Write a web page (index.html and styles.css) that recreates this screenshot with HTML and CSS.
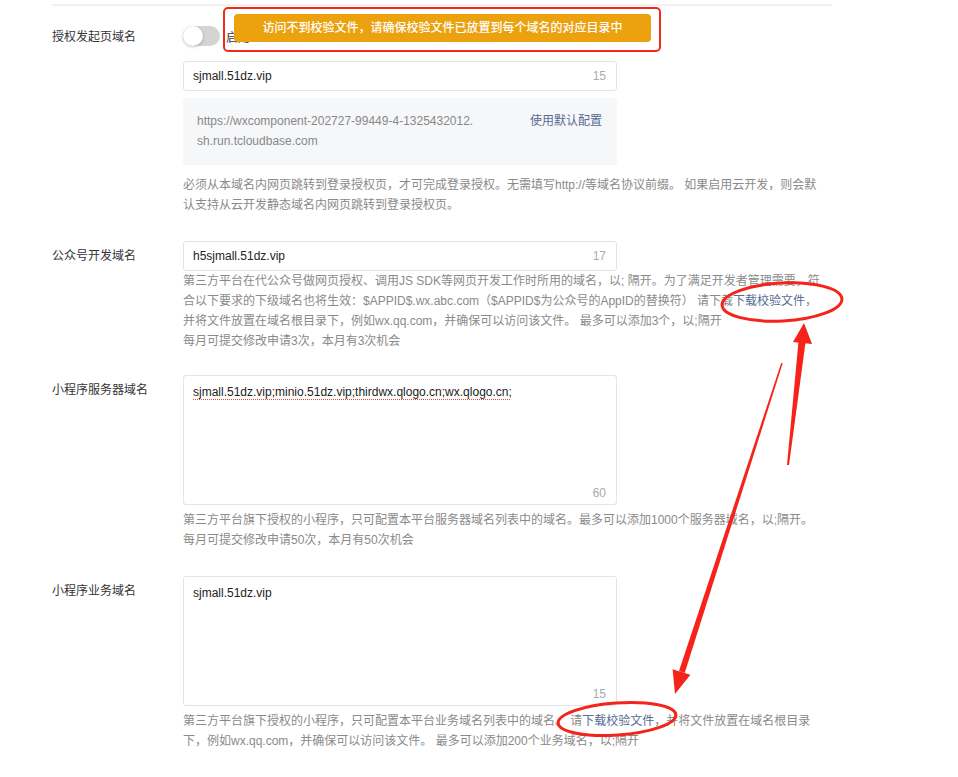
FILE: index.html
```html
<!DOCTYPE html>
<html>
<head>
    <meta charset="UTF-8">
    <meta name="viewport" content="width=device-width, initial-scale=1.0">
    <title>域名配置</title>
    <link rel="stylesheet" href="styles.css">
</head>
<body>
    <div class="page">
        <div class="form">
            <div class="form-row row-auth">
                <div class="form-label">授权发起页域名</div>
                <div class="form-control">
                    <div class="switch-line">
                        <span class="switch"><span class="switch-knob"></span></span>
                        <span class="switch-text">启用</span>
                    </div>
                    <div class="field">
                        <span class="field-value">sjmall.51dz.vip</span>
                        <span class="field-count">15</span>
                    </div>
                    <div class="default-box">
                        <div class="default-url">https://wxcomponent-202727-99449-4-1325432012.<br>sh.run.tcloudbase.com</div>
                        <a class="link" href="#">使用默认配置</a>
                    </div>
                    <p class="help help-first">必须从本域名内网页跳转到登录授权页，才可完成登录授权。无需填写http://等域名协议前缀。 如果启用云开发，则会默<br>认支持从云开发静态域名内网页跳转到登录授权页。</p>
                </div>
            </div>

            <div class="form-row row-mp">
                <div class="form-label label-field">公众号开发域名</div>
                <div class="form-control">
                    <div class="field">
                        <span class="field-value">h5sjmall.51dz.vip</span>
                        <span class="field-count">17</span>
                    </div>
                    <p class="help">第三方平台在代公众号做网页授权、调用JS SDK等网页开发工作时所用的域名，以; 隔开。为了满足开发者管理需要，符<br>合以下要求的下级域名也将生效：$APPID$.wx.abc.com（$APPID$为公众号的AppID的替换符） 请下载<a class="link" href="#">下载校验文件</a>，<br>并将文件放置在域名根目录下，例如wx.qq.com，并确保可以访问该文件。 最多可以添加3个，以;隔开<br>每月可提交修改申请3次，本月有3次机会</p>
                </div>
            </div>

            <div class="form-row row-server">
                <div class="form-label label-area">小程序服务器域名</div>
                <div class="form-control">
                    <div class="area">
                        <div class="area-value"><span class="spell">sjmall.51dz.vip;minio.51dz.vip;thirdwx.qlogo.cn;wx.qlogo.cn;</span></div>
                        <span class="field-count">60</span>
                    </div>
                    <p class="help help-area">第三方平台旗下授权的小程序，只可配置本平台服务器域名列表中的域名。最多可以添加1000个服务器域名，以;隔开。<br>每月可提交修改申请50次，本月有50次机会</p>
                </div>
            </div>

            <div class="form-row row-biz">
                <div class="form-label label-area">小程序业务域名</div>
                <div class="form-control">
                    <div class="area">
                        <div class="area-value">sjmall.51dz.vip</div>
                        <span class="field-count">15</span>
                    </div>
                    <p class="help help-area">第三方平台旗下授权的小程序，只可配置本平台业务域名列表中的域名。 请<a class="link" href="#">下载校验文件</a>，并将文件放置在域名根目录<br>下，例如wx.qq.com，并确保可以访问该文件。 最多可以添加200个业务域名，以;隔开</p>
                </div>
            </div>
        </div>

        <div class="toast-frame"></div>
        <div class="toast">访问不到校验文件，请确保校验文件已放置到每个域名的对应目录中</div>

        <svg class="marks" width="958" height="777" viewBox="0 0 958 777">
            <ellipse cx="782" cy="302" rx="60" ry="19" transform="rotate(-3 782 302)" fill="none" stroke="#f5231a" stroke-width="3"/>
            <ellipse cx="617" cy="719" rx="59" ry="16" transform="rotate(-4 617 719)" fill="none" stroke="#f5231a" stroke-width="3"/>
            <polygon points="787,465 789,465 805.5,342.5 798.5,341.5" fill="#f5231a"/>
            <polygon points="804,323 812,344 793,342" fill="#f5231a"/>
            <polygon points="781.3,362.8 782.7,363.2 684.7,672.9 679,671.1" fill="#f5231a"/>
            <polygon points="675,694 690.4,674.8 672.6,669.2" fill="#f5231a"/>
        </svg>
    </div>
</body>
</html>
```

FILE: styles.css
```css
body {
    margin: 0;
    background: #ffffff;
    font-family: 'Liberation Sans', 'Noto Sans CJK SC', sans-serif;
    font-size: 12px;
    color: #333333;
}

.page {
    position: relative;
    width: 958px;
    height: 777px;
    padding: 4px 0 0 52px;
    box-sizing: border-box;
    overflow: hidden;
}

.form {
    width: 780px;
    border-top: 2px solid #f1f1f1;
}

.form-row {
    display: flex;
}

.row-auth {
    padding-top: 20px;
}

.row-mp {
    margin-top: 26px;
}

.row-server {
    margin-top: 24px;
}

.row-biz {
    margin-top: 26px;
}

.form-label {
    width: 131px;
    flex-shrink: 0;
    line-height: 20px;
    color: #333333;
}

.row-auth .form-label {
    padding-top: 1px;
}

.label-field {
    line-height: 30px;
}

.label-area {
    padding-top: 5px;
}

.form-control {
    flex: 1;
}

.switch-line {
    display: flex;
    align-items: center;
    height: 20px;
}

.switch {
    display: inline-block;
    position: relative;
    width: 37px;
    height: 20px;
    border-radius: 10px;
    background: #d4d4d4;
}

.switch-knob {
    position: absolute;
    left: 0;
    top: 0;
    width: 20px;
    height: 20px;
    border-radius: 50%;
    background: #ffffff;
    box-shadow: 0 1px 3px rgba(0, 0, 0, 0.25);
}

.switch-text {
    margin-left: 6px;
    color: #333333;
}

.field {
    display: flex;
    align-items: center;
    width: 434px;
    height: 30px;
    padding: 0 10px 0 9px;
    border: 1px solid #e4e4e4;
    border-radius: 3px;
    box-sizing: border-box;
    background: #ffffff;
}

.row-auth .field {
    margin-top: 15px;
}

.field-value {
    flex: 1;
    color: #222222;
}

.field-count {
    color: #ababab;
}

.default-box {
    display: flex;
    justify-content: space-between;
    align-items: flex-start;
    width: 434px;
    margin-top: 7px;
    padding: 13px 15px 14px 14px;
    box-sizing: border-box;
    border-radius: 3px;
    background: #f6f7f9;
    line-height: 20px;
}

.default-url {
    color: #888888;
}

.link {
    color: #576b95;
    text-decoration: none;
}

.help {
    margin: 0;
    line-height: 20px;
    color: #8a8a8a;
    white-space: nowrap;
}

.help-first {
    margin-top: 10px;
}

.help-area {
    margin-top: 5px;
}

.area {
    display: flex;
    flex-direction: column;
    width: 434px;
    height: 130px;
    padding: 6px 10px 1px 9px;
    border: 1px solid #e4e4e4;
    border-radius: 3px;
    box-sizing: border-box;
    line-height: 20px;
}

.area-value {
    flex: 1;
    color: #222222;
}

.area .field-count {
    align-self: flex-end;
}

.spell {
    text-decoration: underline dotted #e5473e;
    text-decoration-thickness: 1px;
    text-underline-offset: 3px;
}

.toast-frame {
    position: absolute;
    left: 223px;
    top: 7px;
    width: 438px;
    height: 45px;
    border: 2px solid #f2281c;
    border-radius: 5px;
    box-sizing: border-box;
}

.toast {
    position: absolute;
    left: 234px;
    top: 14px;
    width: 417px;
    height: 28px;
    border-radius: 4px;
    background: #eca20f;
    color: #ffffff;
    font-size: 12px;
    font-weight: 500;
    line-height: 28px;
    text-align: center;
}

.marks {
    position: absolute;
    left: 0;
    top: 0;
    pointer-events: none;
}
```
